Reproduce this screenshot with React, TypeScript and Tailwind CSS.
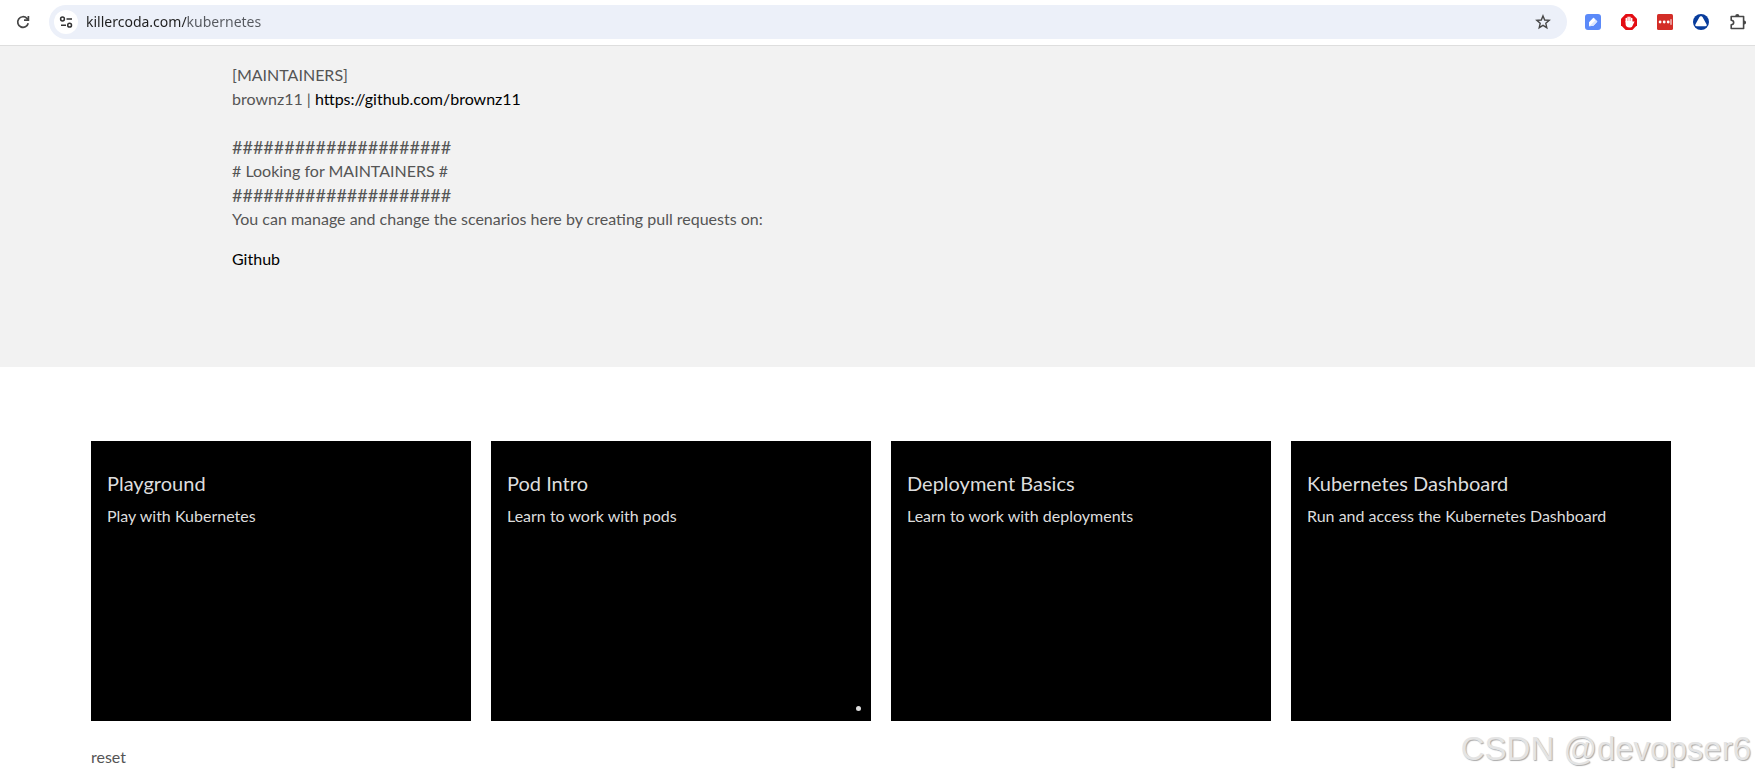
import React, { useState } from 'react';

const BODY = "font-[Lato,'Open_Sans',sans-serif]";
const ICON_BTN = "w-4 h-4 flex items-center justify-center shrink-0";

const SCENARIOS = [
  { title: 'Playground', text: 'Play with Kubernetes' },
  { title: 'Pod Intro', text: 'Learn to work with pods', dot: true },
  { title: 'Deployment Basics', text: 'Learn to work with deployments' },
  { title: 'Kubernetes Dashboard', text: 'Run and access the Kubernetes Dashboard' },
];

function ReloadIcon() {
  return (
    <svg width="16" height="16" viewBox="0 0 16 16" fill="none" stroke="#474747" strokeWidth="1.7">
      <path d="M13.2 9.2A5.3 5.3 0 1 1 11.9 4.4L13.4 6" />
      <path d="M13.4 2v4.2H9" />
    </svg>
  );
}

function TuneIcon() {
  return (
    <svg width="14" height="14" viewBox="0 0 14 14" fill="none" stroke="#333" strokeWidth="1.5">
      <circle cx="3.5" cy="4" r="1.9" />
      <path d="M7.5 4H13M2 10.2h5" />
      <circle cx="10.6" cy="10.2" r="1.9" />
    </svg>
  );
}

function StarIcon() {
  return (
    <svg width="16" height="16" viewBox="0 0 16 16" fill="none" stroke="#474747" strokeWidth="1.4" strokeLinejoin="miter">
      <path d="M8 1.9l1.7 4.1 4.5.4-3.4 2.9 1 4.4L8 11.4l-3.8 2.3 1-4.4-3.4-2.9 4.5-.4z" />
    </svg>
  );
}

function PenIcon() {
  return (
    <svg width="16" height="16" viewBox="0 0 16 16">
      <rect width="16" height="16" rx="3" fill="#5b8af9" />
      <path d="M4.2 12.2V8.2L8.5 3.8 12.4 7.6 8.4 11.8z" fill="#fff" />
      <path d="M8.5 3.8L12.4 7.6 8.4 11.8l-4.2.4z" fill="#dbe6ff" />
      <path d="M4.2 12.2V8.2L8.5 3.8l1.8 2.4z" fill="#fff" />
    </svg>
  );
}

function HandIcon() {
  return (
    <svg width="16" height="16" viewBox="0 0 16 16">
      <path d="M4.7 0h6.6L16 4.7v6.6L11.3 16H4.7L0 11.3V4.7z" fill="#e40d13" />
      <g stroke="#fff" strokeWidth="1.5" strokeLinecap="round" fill="none">
        <path d="M5.3 8V4.5M7.1 8V3.2M8.9 8V3.2M10.7 8V4.4" />
      </g>
      <path d="M4.6 7h6.9v1.3l1-.9c.6-.4 1.1.1.8.7l-2 4.1c-.6 1-1.6 1.3-2.9 1.3-2.4 0-3.8-1.3-3.8-3.4z" fill="#fff" />
    </svg>
  );
}

function PasswordIcon() {
  return (
    <svg width="16" height="16" viewBox="0 0 16 16">
      <rect width="16" height="16" rx="1.5" fill="#d32d27" />
      <circle cx="3.1" cy="8" r="1.4" fill="#fff" />
      <circle cx="7.2" cy="8" r="1.4" fill="#fff" />
      <circle cx="11.2" cy="8" r="1.4" fill="#fff" />
      <path d="M14 5.2v5.6" stroke="#fff" strokeWidth="1" />
    </svg>
  );
}

function TriangleIcon() {
  return (
    <svg width="16" height="16" viewBox="0 0 16 16">
      <circle cx="8" cy="8" r="8" fill="#083c9c" />
      <path d="M8 2.3c.9 0 1.5.6 1.9 1.4l3.6 6.5c.6 1.2.1 2-1.1 2H3.6c-1.2 0-1.7-.8-1.1-2l3.6-6.5c.4-.8 1-1.4 1.9-1.4z" fill="#fff" />
    </svg>
  );
}

function PuzzleIcon() {
  return (
    <svg width="18" height="18" viewBox="0 0 18 18">
      <path
        d="M2.2 3.5h12.4v12H2.2v-3.8c3.3-.2 3.3-4.2 0-4.4z"
        fill="none"
        stroke="#474747"
        strokeWidth="1.6"
        strokeLinejoin="round"
      />
      <path d="M6.2 3.2a2.1 2.1 0 0 1 4.2 0zM15 7.4v4.2a2.1 2.1 0 0 0 0-4.2z" fill="#474747" />
    </svg>
  );
}

function BrowserBar() {
  const [url, setUrl] = useState('killercoda.com/kubernetes');

  return (
    <header className="h-[46px] flex items-center pb-0.5 pl-[15px] pr-2 bg-white border-b border-[#dedede]">
      <button className={ICON_BTN} aria-label="Reload"><ReloadIcon /></button>
      <div className="flex-1 h-[34px] ml-[18px] mr-[18px] pl-[5px] pr-4 flex items-center rounded-full bg-[#ecf0f9]">
        <button className="w-6 h-6 flex items-center justify-center rounded-full bg-white" aria-label="Site information">
          <TuneIcon />
        </button>
        <input
          value={url}
          onChange={(e) => setUrl(e.target.value)}
          aria-label="Address"
          className="flex-1 ml-2 h-6 font-['Noto_Sans','Open_Sans',sans-serif] text-sm text-transparent bg-clip-text bg-[linear-gradient(90deg,#1f1f1f_101px,#55585e_101px)] focus:outline-none"
        />
        <button className={ICON_BTN} aria-label="Bookmark"><StarIcon /></button>
      </div>
      <div className="flex items-center gap-5">
        <button className={ICON_BTN} aria-label="Notes"><PenIcon /></button>
        <button className={ICON_BTN} aria-label="Ad blocker"><HandIcon /></button>
        <button className={ICON_BTN} aria-label="Passwords"><PasswordIcon /></button>
        <button className={ICON_BTN} aria-label="Proxy"><TriangleIcon /></button>
        <button className="w-[18px] h-[18px]" aria-label="Extensions"><PuzzleIcon /></button>
      </div>
    </header>
  );
}

export default function App() {
  return (
    <div className={`relative min-h-screen bg-white text-[#555] ${BODY}`}>
      <BrowserBar />

      {/* Course description */}
      <section className="pt-[17px] pb-24 pl-[232px] pr-6 bg-[#f2f2f2] text-base leading-6">
        <p>[MAINTAINERS]</p>
        <p>brownz11 | <a href="https://github.com/brownz11" className="text-black">https://github.com/brownz11</a></p>
        <p className="mt-6 text-lg leading-6">#####################</p>
        <p># Looking for MAINTAINERS #</p>
        <p className="text-lg leading-6">#####################</p>
        <p>You can manage and change the scenarios here by creating pull requests on:</p>
        <p className="mt-4"><a href="#github" className="text-black">Github</a></p>
      </section>

      {/* Scenarios */}
      <main className="pt-[74px] pl-[91px] pr-[84px]">
        <div className="grid grid-cols-4 gap-5">
          {SCENARIOS.map((s) => (
            <a key={s.title} href="#scenario" className="h-[280px] flex flex-col px-4 pt-7 pb-2 bg-black text-[#ddd]">
              <h2 className="text-xl leading-7">{s.title}</h2>
              <p className="mt-[5px] text-base leading-7">{s.text}</p>
              {s.dot && <span className="w-[5px] h-[5px] mt-auto mr-[-6px] mb-[2px] self-end rounded-full bg-[#ddd]" />}
            </a>
          ))}
        </div>
        <button className="block mt-6 text-base leading-6">reset</button>
      </main>

      <div className="absolute right-1 bottom-2.5 font-['Liberation_Sans',Arial,sans-serif] text-[33px] leading-10 text-[#e4e4e4] [text-shadow:1px_1px_1px_#aaa]">
        CSDN @devopser6
      </div>
    </div>
  );
}
